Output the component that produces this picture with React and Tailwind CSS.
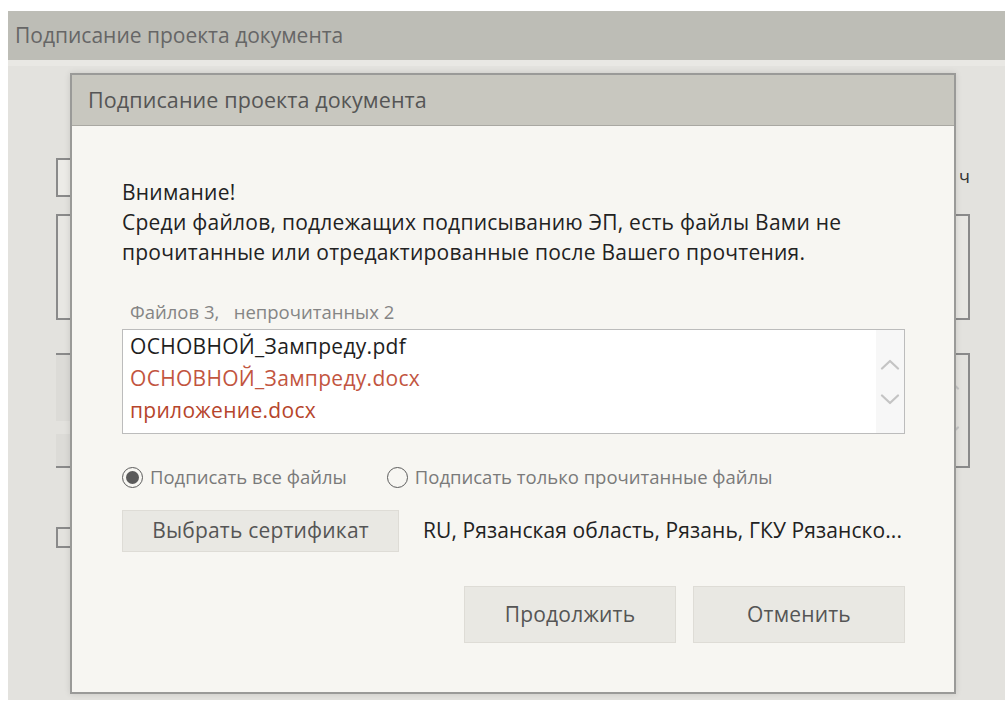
const FONT = { fontFamily: '"Open Sans", "Noto Sans", sans-serif' }

const FILES = [
  { name: 'ОСНОВНОЙ_Зампреду.pdf', color: 'text-[#1e1e1e]' },
  { name: 'ОСНОВНОЙ_Зампреду.docx', color: 'text-[#c2553f]' },
  { name: 'приложение.docx', color: 'text-[#b6452c]' },
]

function Chevron({ up, className = '' }) {
  return (
    <svg width="20" height="11" viewBox="0 0 20 11" className={className}>
      <path
        d={up ? 'M2 9.5 L10 2 L18 9.5' : 'M2 1.5 L10 9 L18 1.5'}
        fill="none"
        stroke="#c4c4c4"
        strokeWidth="2.2"
        strokeLinecap="round"
        strokeLinejoin="round"
      />
    </svg>
  )
}

function Radio({ checked, label }) {
  return (
    <label className="flex items-center gap-[7px] text-[18.5px] leading-[22px] text-[#7a7a7a] whitespace-nowrap">
      <span className="w-[21px] h-[21px] rounded-full border-[1.5px] border-[#5c5c5c] flex items-center justify-center">
        {checked && <span className="w-[13px] h-[13px] rounded-full bg-[#5a5a5a]" />}
      </span>
      {label}
    </label>
  )
}

function Button({ children, className = '' }) {
  return (
    <button className={`bg-[#e9e8e3] border border-[#dedcd6] text-[#555] text-[21px] tracking-[0.2px] flex items-center justify-center ${className}`}>
      {children}
    </button>
  )
}

// form of the parent window, mostly covered by the dialog
function BackgroundForm() {
  return (
    <div className="flex flex-col pl-[48px] pr-[35px] pt-[92px]">
      <div className="flex items-center justify-between h-[39px]">
        <div className="w-[300px] h-[39px] border-2 border-[#8a8a8a] bg-[#ecebe7]" />
        <span className="text-[18px] text-[#333] leading-none mb-[4px]">ч</span>
      </div>
      <div className="mt-[17px] h-[106px] border-2 border-[#8a8a8a] bg-[#e8e7e3]" />
      <div className="mt-[33px] h-[115px] border-t-2 border-r-2 border-b-2 border-[#8a8a8a] flex">
        <div className="flex-1 flex flex-col">
          <div className="h-[67px] bg-[#dcdbd7]" />
          <div className="mt-[13px] h-[33px] bg-[#dcdbd7]" />
        </div>
        <div className="w-[36px] flex flex-col items-center justify-center gap-[36px] pb-[6px]">
          <Chevron up />
          <Chevron />
        </div>
      </div>
      <div className="mt-[59px] w-[20px] h-[21px] border-2 border-[#8a8a8a]" />
    </div>
  )
}

function SignDialog() {
  return (
    <div className="absolute left-[70px] top-[73px] w-[886px] h-[621px] bg-[#f7f6f2] border-2 border-[#9a9a98] shadow-[0_0_6px_rgba(0,0,0,0.12)] flex flex-col">
      <div className="h-[51px] bg-[#c8c7bf] border-b border-[#a9a8a2] pl-[16px] flex items-center text-[21.5px] tracking-[0.1px] text-[#555]">
        Подписание проекта документа
      </div>

      <div className="flex flex-col pl-[50px] pr-[49px] pt-[51px]">
        <div className="text-[21px] tracking-[0.25px] leading-[30px] text-[#222]">
          <div>Внимание!</div>
          <div>Среди файлов, подлежащих подписыванию ЭП, есть файлы Вами не</div>
          <div>прочитанные или отредактированные после Вашего прочтения.</div>
        </div>

        <div className="mt-[35px] pl-[8px] h-[20px] leading-[20px] text-[18.5px] text-[#858585]">
          Файлов 3,&nbsp;&nbsp; непрочитанных 2
        </div>

        <div className="mt-[7px] h-[105px] bg-white border border-[#bcbcbc] flex">
          <div className="flex-1 pl-[7px] flex flex-col">
            {FILES.map(f => (
              <div key={f.name} className={`h-[32px] leading-[32px] text-[21px] tracking-[0.3px] ${f.color}`}>{f.name}</div>
            ))}
          </div>
          <div className="w-[28px] bg-[#f7f7f7] flex flex-col items-center justify-center gap-[24px]">
            <Chevron up />
            <Chevron />
          </div>
        </div>

        <div className="mt-[32px] h-[22px] flex items-center gap-[40px]">
          <Radio checked label="Подписать все файлы" />
          <Radio label="Подписать только прочитанные файлы" />
        </div>

        <div className="mt-[22px] flex items-center gap-[24px]">
          <Button className="w-[277px] h-[42px] shrink-0">Выбрать сертификат</Button>
          <span className="text-[21px] tracking-[0.1px] text-[#222] whitespace-nowrap">RU, Рязанская область, Рязань, ГКУ Рязанско...</span>
        </div>

        <div className="mt-[34px] flex justify-end gap-[17px]">
          <Button className="w-[212px] h-[57px]">Продолжить</Button>
          <Button className="w-[212px] h-[57px]">Отменить</Button>
        </div>
      </div>
    </div>
  )
}

export default function App() {
  return (
    <div className="w-[1005px] h-[701px] bg-white relative overflow-hidden pt-[11px] pl-[8px]" style={FONT}>
      <div className="h-[689px] flex flex-col">
        <div className="h-[49px] bg-[#bdbdb6] pl-[7px] flex items-center text-[21px] text-[#666]">
          Подписание проекта документа
        </div>
        <div className="flex-1 bg-[#e3e2de] border-t-[6px] border-[#e9e8e4]">
          <BackgroundForm />
        </div>
      </div>
      <SignDialog />
    </div>
  )
}
